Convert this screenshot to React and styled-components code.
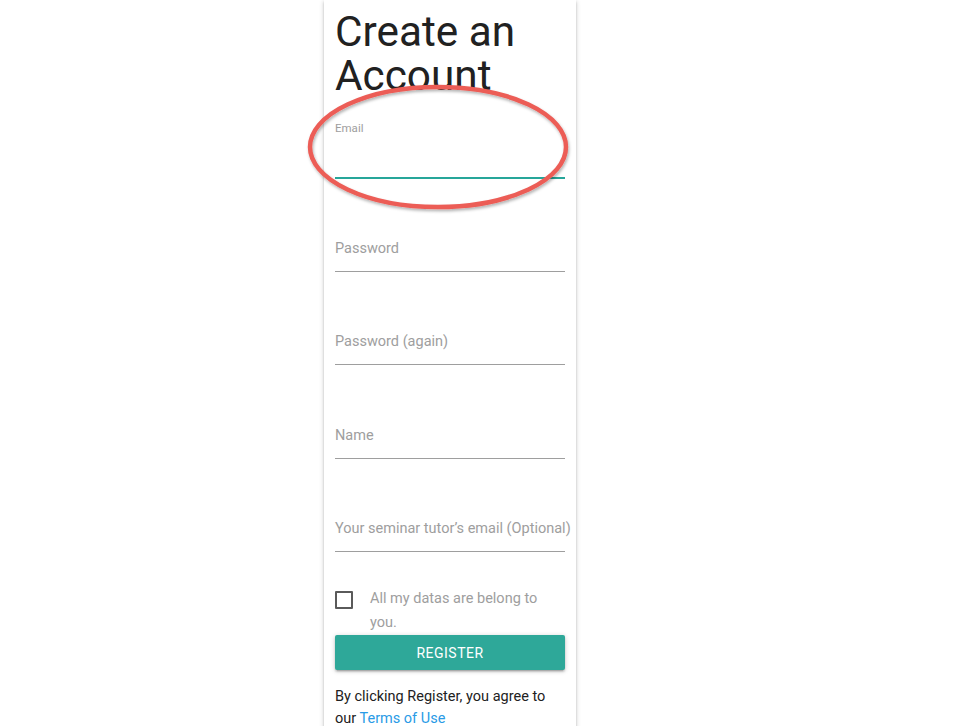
import React from 'react';
import styled, { createGlobalStyle } from 'styled-components';

const GlobalStyle = createGlobalStyle`
  html, body {
    margin: 0;
    padding: 0;
    background: #fff;
    font-family: Roboto, "Liberation Sans", sans-serif;
    overflow: hidden;
  }
`;

const Page = styled.div`
  height: 726px;
  overflow: hidden;
`;

const Card = styled.div`
  position: relative;
  margin-left: 324px;
  width: 230px;
  min-height: 760px;
  padding: 10px 11px 0;
  background: #fff;
  box-shadow: 0 2px 2px 0 rgba(0, 0, 0, 0.14), 0 3px 1px -2px rgba(0, 0, 0, 0.12),
    0 1px 5px 0 rgba(0, 0, 0, 0.2);
`;

const Title = styled.h1`
  margin: 0;
  font-size: 42.3px;
  line-height: 44px;
  font-weight: 400;
  color: #212121;
`;

const Field = styled.div`
  position: relative;
  margin-top: ${p => p.$gap}px;
  padding-top: 12px;
`;

const Input = styled.input`
  display: block;
  box-sizing: border-box;
  width: 100%;
  height: 44px;
  margin: 0;
  padding: 0;
  border: none;
  border-bottom: 1px solid #9e9e9e;
  outline: none;
  background: transparent;
  font-family: inherit;
  font-size: 14.5px;
  color: #212121;

  ${p => p.$active && `
    border-bottom: 2px solid #26a69a;
    height: 45px;
  `}
`;

const Label = styled.label`
  position: absolute;
  left: 0;
  top: ${p => (p.$floated ? 0 : 11)}px;
  font-size: ${p => (p.$floated ? 11.5 : 14.5)}px;
  line-height: ${p => (p.$floated ? 12 : 44)}px;
  color: #9e9e9e;
  white-space: nowrap;
  pointer-events: none;
`;

const CheckRow = styled.label`
  display: flex;
  align-items: flex-start;
  margin-top: 38px;
  gap: 17px;
`;

const Box = styled.span`
  flex: none;
  box-sizing: border-box;
  width: 18px;
  height: 18px;
  margin-top: 1px;
  border: 2px solid #5a5a5a;
  border-radius: 1px;
`;

const CheckText = styled.span`
  font-size: 14.5px;
  line-height: 24px;
  color: #9e9e9e;
  margin-top: -3px;
`;

const Button = styled.button`
  display: block;
  width: 100%;
  height: 35px;
  margin-top: 0;
  border: none;
  border-radius: 2px;
  background: #2ea899;
  color: #fff;
  font-family: inherit;
  font-size: 14px;
  letter-spacing: 0.5px;
  text-transform: uppercase;
  box-shadow: 0 2px 2px 0 rgba(0, 0, 0, 0.14), 0 3px 1px -2px rgba(0, 0, 0, 0.12),
    0 1px 5px 0 rgba(0, 0, 0, 0.2);
`;

const Terms = styled.p`
  margin: 16px 0 0;
  font-size: 14.5px;
  line-height: 22px;
  color: #212121;

  a {
    color: #2a9be6;
    text-decoration: none;
  }
`;

const Annotation = styled.svg`
  position: absolute;
  left: -18px;
  top: 83px;
  overflow: visible;
  pointer-events: none;
`;

const fields = [
  { name: 'email', label: 'Email', active: true, gap: 24 },
  { name: 'password', label: 'Password', gap: 37 },
  { name: 'password2', label: 'Password (again)', gap: 37 },
  { name: 'name', label: 'Name', gap: 38 },
  { name: 'tutor', label: 'Your seminar tutor\u2019s email (Optional)', gap: 37 },
];

export default function App() {
  return (
    <Page>
      <GlobalStyle />
      <Card>
        <Title>Create an Account</Title>
        {fields.map(f => (
          <Field key={f.name} $gap={f.gap}>
            <Input id={f.name} $active={f.active} />
            <Label htmlFor={f.name} $floated={f.active}>{f.label}</Label>
          </Field>
        ))}
        <CheckRow>
          <Box />
          <CheckText>All my datas are belong to you.</CheckText>
        </CheckRow>
        <Button>Register</Button>
        <Terms>
          By clicking Register, you agree to our <a href="#">Terms of Use</a>
        </Terms>
        <Annotation width="264" height="128" viewBox="0 0 264 128">
          <defs>
            <filter id="sh" x="-10%" y="-20%" width="120%" height="140%">
              <feDropShadow dx="1" dy="2" stdDeviation="1.5" floodColor="#000" floodOpacity="0.3" />
            </filter>
          </defs>
          <ellipse cx="132" cy="64" rx="128" ry="60" fill="none" stroke="#ec5d57" strokeWidth="4.5" filter="url(#sh)" />
        </Annotation>
      </Card>
    </Page>
  );
}
